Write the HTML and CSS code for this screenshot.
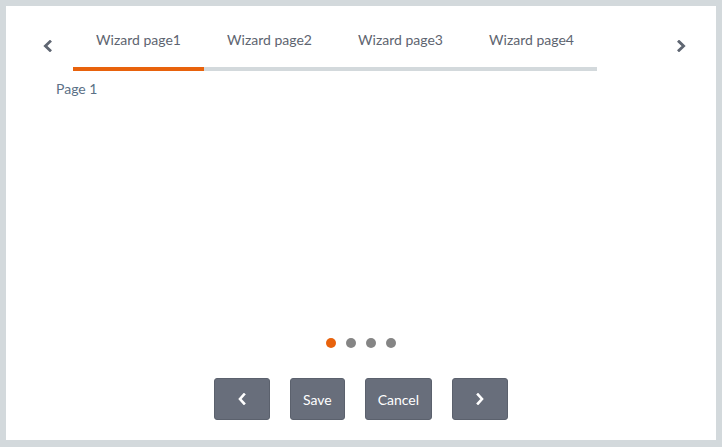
FILE: index.html
```html
<!DOCTYPE html>
<html>
<head>
<meta charset="utf-8">
<link rel="stylesheet" href="styles.css">
</head>
<body>
<div class="wizard">
  <div class="header">
    <span class="arrow arrow-left">
      <svg width="9" height="12" viewBox="0 0 9 12"><path d="M7 1.6 L2.4 6 L7 10.4" fill="none" stroke="#5f6672" stroke-width="2.8" stroke-linecap="square"/></svg>
    </span>
    <div class="tabs">
      <div class="tab active">Wizard page1</div>
      <div class="tab">Wizard page2</div>
      <div class="tab">Wizard page3</div>
      <div class="tab">Wizard page4</div>
    </div>
    <span class="arrow arrow-right">
      <svg width="9" height="12" viewBox="0 0 9 12"><path d="M2 1.6 L6.6 6 L2 10.4" fill="none" stroke="#5f6672" stroke-width="2.8" stroke-linecap="square"/></svg>
    </span>
  </div>
  <div class="content">Page 1</div>
  <div class="dots">
    <span class="dot active"></span>
    <span class="dot"></span>
    <span class="dot"></span>
    <span class="dot"></span>
  </div>
  <div class="buttons">
    <button class="btn btn-icon"><svg width="8" height="12" viewBox="0 0 8 12"><path d="M6 1.5 L2 6 L6 10.5" fill="none" stroke="#ffffff" stroke-width="2.6" stroke-linecap="square"/></svg></button>
    <button class="btn">Save</button>
    <button class="btn">Cancel</button>
    <button class="btn btn-icon"><svg width="8" height="12" viewBox="0 0 8 12"><path d="M2 1.5 L6 6 L2 10.5" fill="none" stroke="#ffffff" stroke-width="2.6" stroke-linecap="square"/></svg></button>
  </div>
</div>
</body>
</html>
```

FILE: styles.css
```css
html, body {
  margin: 0;
  padding: 0;
}
body {
  background: #d3d9dc;
  padding: 6px 6px 7px 6px;
  font-family: Lato, "Open Sans", sans-serif;
  font-size: 14px;
}
.wizard {
  background: #ffffff;
  height: 434px;
  display: flex;
  flex-direction: column;
}
.header {
  display: flex;
  align-items: flex-start;
  padding: 25px 30px 0 37px;
}
.arrow {
  display: block;
  width: 9px;
  height: 12px;
  margin-top: 9px;
}
.arrow svg {
  display: block;
}
.arrow-left {
  margin-right: 21px;
}
.arrow-right {
  margin-left: auto;
}
.tabs {
  display: flex;
}
.tab {
  width: 131px;
  text-align: center;
  line-height: 17px;
  padding-bottom: 19px;
  border-bottom: 4px solid #d3d9dc;
  color: #5e6470;
}
.tab.active {
  border-bottom-color: #e8620c;
}
.content {
  flex: 1;
  padding-left: 50px;
  margin-top: 9px;
  line-height: 17px;
  color: #5b7086;
}
.dots {
  display: flex;
  justify-content: center;
  gap: 10px;
}
.dot {
  width: 10px;
  height: 10px;
  border-radius: 50%;
  background: #858585;
}
.dot.active {
  background: #e8620c;
}
.buttons {
  display: flex;
  justify-content: center;
  gap: 20px;
  margin-top: 30px;
  padding-bottom: 20px;
}
.btn {
  height: 42px;
  padding: 0 12px;
  background: #686e7b;
  border: 1px solid #5b616d;
  border-radius: 3px;
  color: #ffffff;
  font-family: Lato, "Open Sans", sans-serif;
  font-size: 14px;
  display: flex;
  align-items: center;
  justify-content: center;
}
.btn-icon {
  width: 56px;
}
.btn svg {
  display: block;
}
```
